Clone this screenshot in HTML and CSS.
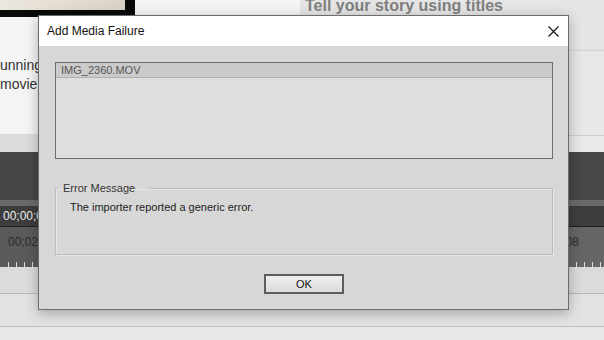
FILE: index.html
```html
<!DOCTYPE html>
<html>
<head>
<meta charset="utf-8">
<link rel="stylesheet" href="styles.css">
</head>
<body>
<div class="app">
  <div class="top">
    <div class="left-panel">
      <div class="thumb"><div class="photo"></div></div>
      <div class="story-text">
        <div>unning</div>
        <div>movie</div>
      </div>
      <div class="left-band"></div>
    </div>
    <div class="right-panel">
      <div class="panel-head"><span class="panel-title">Tell your story using titles</span></div>
      <div class="panel-mid"></div>
      <div class="panel-low"></div>
    </div>
  </div>
  <div class="tl-dark"></div>
  <div class="tl-stripe"></div>
  <div class="tl-time"><span>00;00;00;00</span></div>
  <div class="tl-ruler">
    <div class="ruler-labels"><span>00;02;00</span><span>00;04;08</span></div>
    <div class="ticks"></div>
  </div>
  <div class="track-a"></div>
  <div class="track-b"></div>
  <div class="track-c"></div>

  <div class="dialog">
    <div class="titlebar">
      <span class="title">Add Media Failure</span>
      <svg class="close" width="11" height="11" viewBox="0 0 11 11"><path d="M0.5 0.5 L10.5 10.5 M10.5 0.5 L0.5 10.5" stroke="#111" stroke-width="1.1" fill="none"/></svg>
    </div>
    <div class="dlg-body">
      <div class="listbox">
        <div class="list-item">IMG_2360.MOV</div>
      </div>
      <fieldset class="group">
        <legend class="group-label">Error Message</legend>
        <div class="message">The importer reported a generic error.</div>
      </fieldset>
      <div class="actions">
        <button class="ok">OK</button>
      </div>
    </div>
  </div>
</div>
</body>
</html>
```

FILE: styles.css
```css
* { box-sizing: border-box; }
html, body { margin: 0; padding: 0; }
body {
  width: 604px;
  height: 340px;
  overflow: hidden;
  font-family: "Liberation Sans", Arial, sans-serif;
  background: #e6e6e6;
}
.app {
  position: relative;
  width: 604px;
  height: 340px;
  overflow: hidden;
}
.top {
  display: flex;
  height: 152px;
}
.left-panel {
  width: 300px;
  display: flex;
  flex-direction: column;
  background: #f4f4f4;
  overflow: hidden;
}
.thumb {
  width: 135px;
  height: 17px;
  background: #0a0a0a;
  flex: none;
}
.photo {
  width: 125px;
  height: 10px;
  background: linear-gradient(to right, #ece7df, #e2dbd0 60%, #d9d2c6);
}
.story-text {
  margin-top: 39px;
  font-size: 14px;
  line-height: 19px;
  color: #333;
  white-space: nowrap;
}
.left-band {
  margin-top: auto;
  height: 18px;
  background: #dcdcdc;
  flex: none;
}
.right-panel {
  flex: 1;
  display: flex;
  flex-direction: column;
  background: #e5e5e5;
}
.panel-head {
  height: 51px;
  border-bottom: 1px solid #d2d2d2;
  padding-left: 5px;
  overflow: hidden;
}
.panel-title {
  display: block;
  margin-top: -2px;
  font-weight: bold;
  font-size: 16px;
  line-height: 16px;
  color: #7f7f7f;
  white-space: nowrap;
}
.panel-mid {
  height: 85px;
  border-bottom: 1px solid #cfcfcf;
  background: #e7e7e7;
}
.panel-low {
  flex: 1;
  background: #e9e9e9;
}
.tl-dark {
  height: 48px;
  background: linear-gradient(to right, #464646, #4a4a4a 50%, #474747);
}
.tl-stripe {
  height: 6px;
  background: #6a6a6a;
}
.tl-time {
  height: 21px;
  background: #3d3d3d;
  border-bottom: 1px solid #1f1f1f;
  color: #ececec;
  font-size: 12px;
  line-height: 20px;
  padding-left: 3px;
}
.tl-ruler {
  height: 40px;
  background: linear-gradient(to right, #5a5a5a, #5f5f5f 50%, #666);
  display: flex;
  flex-direction: column;
}
.ruler-labels {
  display: flex;
  justify-content: space-between;
  padding: 8px 25px 0 8px;
  font-size: 12px;
  line-height: 14px;
  color: #2b2b2b;
}
.ticks {
  margin-top: auto;
  height: 5px;
  margin-left: 8px;
  background-image: repeating-linear-gradient(to right, #dcdcdc 0 1px, transparent 1px 8px);
}
.track-a {
  height: 27px;
  background: #dbdbdb;
  border-bottom: 1px solid #b9b9b9;
}
.track-b {
  height: 33px;
  background: #e2e2e2;
  border-bottom: 1px solid #bdbdbd;
}
.track-c {
  height: 13px;
  background: #e8e8e8;
}

/* dialog overlay */
.dialog {
  position: absolute;
  left: 38px;
  top: 15px;
  width: 531px;
  height: 295px;
  border: 1px solid #6c6c6c;
  background: #d7d7d7;
  box-shadow: 0 3px 12px rgba(0, 0, 0, 0.28);
  display: flex;
  flex-direction: column;
}
.titlebar {
  height: 30px;
  background: #ffffff;
  display: flex;
  align-items: center;
  justify-content: space-between;
  padding: 0 9px 0 8px;
  flex: none;
}
.title {
  font-size: 12px;
  color: #111;
}
.close { display: block; }
.dlg-body {
  flex: 1;
  padding: 16px 15px 0 16px;
  display: flex;
  flex-direction: column;
}
.listbox {
  height: 97px;
  border: 1px solid #6e6e6e;
  background: #dedede;
  flex: none;
}
.list-item {
  height: 15px;
  background: #cbcbcb;
  border-bottom: 1px solid #b0b0b0;
  padding-left: 5px;
  font-size: 11px;
  line-height: 14px;
  color: #555;
}
.group {
  margin: 23px 0 0 0;
  padding: 0;
  height: 73px;
  border: 1px solid #bdbdbd;
  box-shadow: inset 1px 1px 0 #e6e6e6, 1px 1px 0 #e6e6e6;
  min-width: 0;
  flex: none;
}
.group-label {
  margin-left: 2px;
  padding: 0 13px 0 5px;
  font-size: 11px;
  line-height: 13px;
  color: #333;
}
.message {
  margin-top: 6px;
  padding-left: 14px;
  font-size: 11px;
  line-height: 13px;
  color: #222;
}
.actions {
  display: flex;
  justify-content: center;
  margin-top: 19px;
}
.ok {
  width: 80px;
  height: 20px;
  border: 2px solid #5e5e5e;
  background: linear-gradient(#efefef, #dadada);
  font-family: "Liberation Sans", Arial, sans-serif;
  font-size: 11px;
  color: #111;
  padding: 0;
  margin: 0;
  line-height: 16px;
}
```
